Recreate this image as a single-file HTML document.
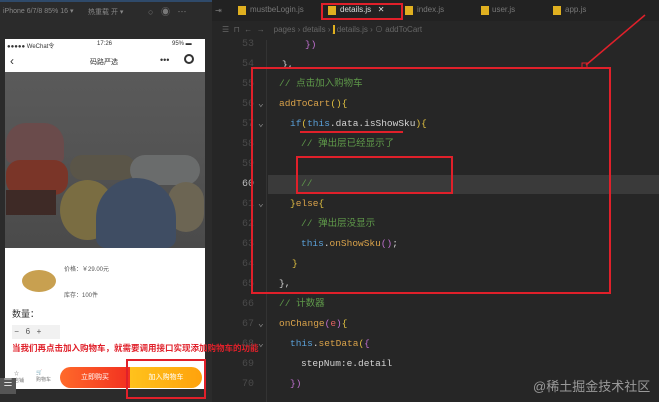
<!DOCTYPE html>
<html><head><meta charset="utf-8"><style>
*{margin:0;padding:0;box-sizing:border-box}
body{width:659px;height:402px;overflow:hidden;background:#262626;font-family:"Liberation Sans","Noto Sans CJK SC",sans-serif;position:relative}
.a{position:absolute}
.c{position:absolute;font-family:"Liberation Mono","Noto Sans CJK SC",monospace;font-size:9.5px;white-space:pre;line-height:14px}
.ln{font-family:"Liberation Mono",monospace;font-size:10px;color:#4a4a4a;left:236px}
.cm{color:#5f9a4a}.fn{color:#d9a24a}.kw{color:#5aa0d8}.pl{color:#d4d4d4}.br{color:#e0c040}.pu{color:#c070d0}
</style></head><body>
<div class="a" style="left:0;top:0;width:212px;height:402px;background:#2b2b2b"></div>
<div class="a" style="left:0;top:0;width:659px;height:2px;background:#2f4a6a"></div>
<div class="a" style="left:3px;top:7px;font-size:7px;color:#888">iPhone 6/7/8 85% 16 ▾</div>
<div class="a" style="left:88px;top:7px;font-size:7px;color:#888">热重载 开 ▾</div>
<div class="a" style="left:148px;top:5px;font-size:9px;color:#777">○ &nbsp; ◉ &nbsp; ⋯</div>
<div class="a" style="left:5px;top:39px;width:200px;height:350px;background:#fff"></div>
<div class="a" style="left:7px;top:41px;font-size:6px;color:#333">●●●●● WeChat令</div>
<div class="a" style="left:97px;top:41px;font-size:6px;color:#333">17:26</div>
<div class="a" style="left:172px;top:41px;font-size:6px;color:#333">95% ▬</div>
<div class="a" style="left:10px;top:54px;font-size:12px;color:#333">‹</div>
<div class="a" style="left:90px;top:57px;font-size:7px;color:#333">码路严选</div>
<div class="a" style="left:160px;top:55px;font-size:9px;color:#333">•••</div>
<div class="a" style="left:184px;top:54px;width:10px;height:10px;border:2px solid #333;border-radius:50%"></div>
<div class="a" style="left:5px;top:72px;width:200px;height:176px;background:linear-gradient(#5a5a5a,#545454 45%,#4a4a4a)"></div>
<div class="a" style="left:6px;top:123px;width:58px;height:40px;background:#6a4b4b;border-radius:20px 20px 6px 6px"></div>
<div class="a" style="left:6px;top:160px;width:62px;height:35px;background:#7a3528;border-radius:14px"></div>
<div class="a" style="left:6px;top:190px;width:50px;height:25px;background:#3e2a26"></div>
<div class="a" style="left:70px;top:155px;width:65px;height:25px;background:#5a5548;border-radius:12px"></div>
<div class="a" style="left:130px;top:155px;width:70px;height:30px;background:#6a6c6c;border-radius:15px"></div>
<div class="a" style="left:60px;top:180px;width:55px;height:60px;background:#7a6d42;border-radius:50%"></div>
<div class="a" style="left:168px;top:182px;width:36px;height:50px;background:#6c6553;border-radius:18px"></div>
<div class="a" style="left:96px;top:178px;width:80px;height:70px;background:#3f4d63;border-radius:40px 40px 10px 10px"></div>
<div class="a" style="left:22px;top:270px;width:34px;height:22px;background:#c8a050;border-radius:50%"></div>
<div class="a" style="left:64px;top:264px;font-size:6px;color:#555">价格：￥29.00元</div>
<div class="a" style="left:64px;top:290px;font-size:6px;color:#555">库存：100件</div>
<div class="a" style="left:12px;top:307px;font-size:9px;color:#333">数量：</div>
<div class="a" style="left:12px;top:325px;width:48px;height:14px;background:#f1f1f1;font-size:8px;color:#555;line-height:14px">&nbsp;− &nbsp;&nbsp;6 &nbsp;&nbsp;+</div>
<div class="a" style="left:12px;top:342px;font-size:8.5px;font-weight:bold;color:#e0202a;white-space:nowrap">当我们再点击加入购物车，就需要调用接口实现添加购物车的功能</div>
<div class="a" style="left:14px;top:370px;font-size:5px;color:#777">☆<br>店铺</div>
<div class="a" style="left:36px;top:370px;font-size:5px;color:#777">🛒<br>购物车</div>
<div class="a" style="left:60px;top:367px;width:70px;height:21px;background:linear-gradient(90deg,#ff6a2a,#f23020);border-radius:11px 0 0 11px;font-size:7px;color:#fff;text-align:center;line-height:21px">立即购买</div>
<div class="a" style="left:130px;top:367px;width:72px;height:21px;background:linear-gradient(90deg,#ffc21c,#ffa20c);border-radius:0 11px 11px 0;font-size:7px;color:#fff;text-align:center;line-height:21px">加入购物车</div>
<div class="a" style="left:126px;top:359px;width:80px;height:40px;border:2px solid #e0202a"></div>
<div class="a" style="left:0;top:378px;width:16px;height:16px;background:#555;color:#ddd;font-size:10px;text-align:center">☰</div>
<div class="a" style="left:212px;top:0;width:447px;height:21px;background:#222"></div>
<div class="a" style="left:212px;top:21px;width:447px;height:19px;background:#262626"></div>
<div class="a" style="left:215px;top:6px;font-size:8px;color:#777">⇥</div>
<div class="a" style="left:238px;top:6px;width:8px;height:9px;background:#e0b020"></div><div class="a" style="left:250px;top:5px;font-size:8px;color:#777">mustbeLogin.js</div>
<div class="a" style="left:321px;top:3px;width:82px;height:17px;border:2px solid #e0202a"></div>
<div class="a" style="left:328px;top:6px;width:8px;height:9px;background:#e0b020"></div><div class="a" style="left:340px;top:5px;font-size:8px;color:#ddd">details.js &nbsp;&nbsp;✕</div>
<div class="a" style="left:405px;top:6px;width:8px;height:9px;background:#e0b020"></div><div class="a" style="left:417px;top:5px;font-size:8px;color:#777">index.js</div>
<div class="a" style="left:481px;top:6px;width:8px;height:9px;background:#e0b020"></div><div class="a" style="left:492px;top:5px;font-size:8px;color:#777">user.js</div>
<div class="a" style="left:553px;top:6px;width:8px;height:9px;background:#e0b020"></div><div class="a" style="left:565px;top:5px;font-size:8px;color:#777">app.js</div>
<div class="a" style="left:222px;top:24px;font-size:8px;color:#666">☰ &nbsp;⊓ &nbsp;← &nbsp;→ &nbsp;&nbsp;&nbsp;pages › details › <span style="background:#e0b020;color:#e0b020">j</span> details.js › ⊙ addToCart</div>
<div class="a" style="left:268px;top:175px;width:391px;height:19px;background:#3a3a3a"></div>
<div class="a" style="left:266px;top:40px;width:1px;height:362px;background:#333"></div>
<div class="a ln" style="top:35px;line-height:20px;text-align:right;width:18px">53<br>54<br>55<br>56<br>57<br>58<br>59<br><span style="color:#bbb">60</span><br>61<br>62<br>63<br>64<br>65<br>66<br>67<br>68<br>69<br>70</div>
<div class="c" style="left:258px;top:94px;color:#888;line-height:20px">⌄<br>⌄<br><br><br><br>⌄</div>
<div class="c" style="left:258px;top:314px;color:#888;line-height:20px">⌄<br>⌄</div>
<div class="c pu" style="left:305px;top:38px">})</div>
<div class="c pl" style="left:282px;top:58px">},</div>
<div class="c cm" style="left:279px;top:77px">// 点击加入购物车</div>
<div class="c" style="left:279px;top:97px"><span class="fn">addToCart</span><span class="br">(){</span></div>
<div class="c" style="left:290px;top:117px"><span class="kw">if</span><span class="br">(</span><span class="kw">this</span><span class="pl">.data.isShowSku</span><span class="br">){</span></div>
<div class="c cm" style="left:301px;top:137px">// 弹出层已经显示了</div>
<div class="c cm" style="left:301px;top:177px">//</div>
<div class="c" style="left:290px;top:197px"><span class="br">}</span><span class="fn">else</span><span class="br">{</span></div>
<div class="c cm" style="left:301px;top:217px">// 弹出层没显示</div>
<div class="c" style="left:301px;top:237px"><span class="kw">this</span><span class="pl">.</span><span class="fn">onShowSku</span><span class="pu">()</span><span class="pl">;</span></div>
<div class="c br" style="left:292px;top:257px">}</div>
<div class="c pl" style="left:279px;top:277px">},</div>
<div class="c cm" style="left:279px;top:297px">// 计数器</div>
<div class="c" style="left:279px;top:317px"><span class="fn">onChange</span><span class="pu">(</span><span style="color:#e06060">e</span><span class="pu">)</span><span class="br">{</span></div>
<div class="c" style="left:290px;top:337px"><span class="kw">this</span><span class="pl">.</span><span class="fn">setData</span><span class="br">(</span><span class="pu">{</span></div>
<div class="c pl" style="left:301px;top:357px">stepNum:e.detail</div>
<div class="c pu" style="left:290px;top:377px">})</div>
<div class="a" style="left:300px;top:131px;width:103px;height:2px;background:#e0202a"></div>
<div class="a" style="left:251px;top:67px;width:360px;height:227px;border:2px solid #e0202a"></div>
<div class="a" style="left:296px;top:156px;width:157px;height:38px;border:2px solid #e0202a"></div>
<svg class="a" style="left:580px;top:10px" width="70" height="60"><line x1="65" y1="5" x2="6" y2="55" stroke="#e0202a" stroke-width="1.5"/><rect x="2" y="53" width="5" height="5" fill="none" stroke="#e0202a"/></svg>
<div class="a" style="left:533px;top:376px;font-size:13px;color:#9a9a9a">@稀土掘金技术社区</div>
</body></html>
